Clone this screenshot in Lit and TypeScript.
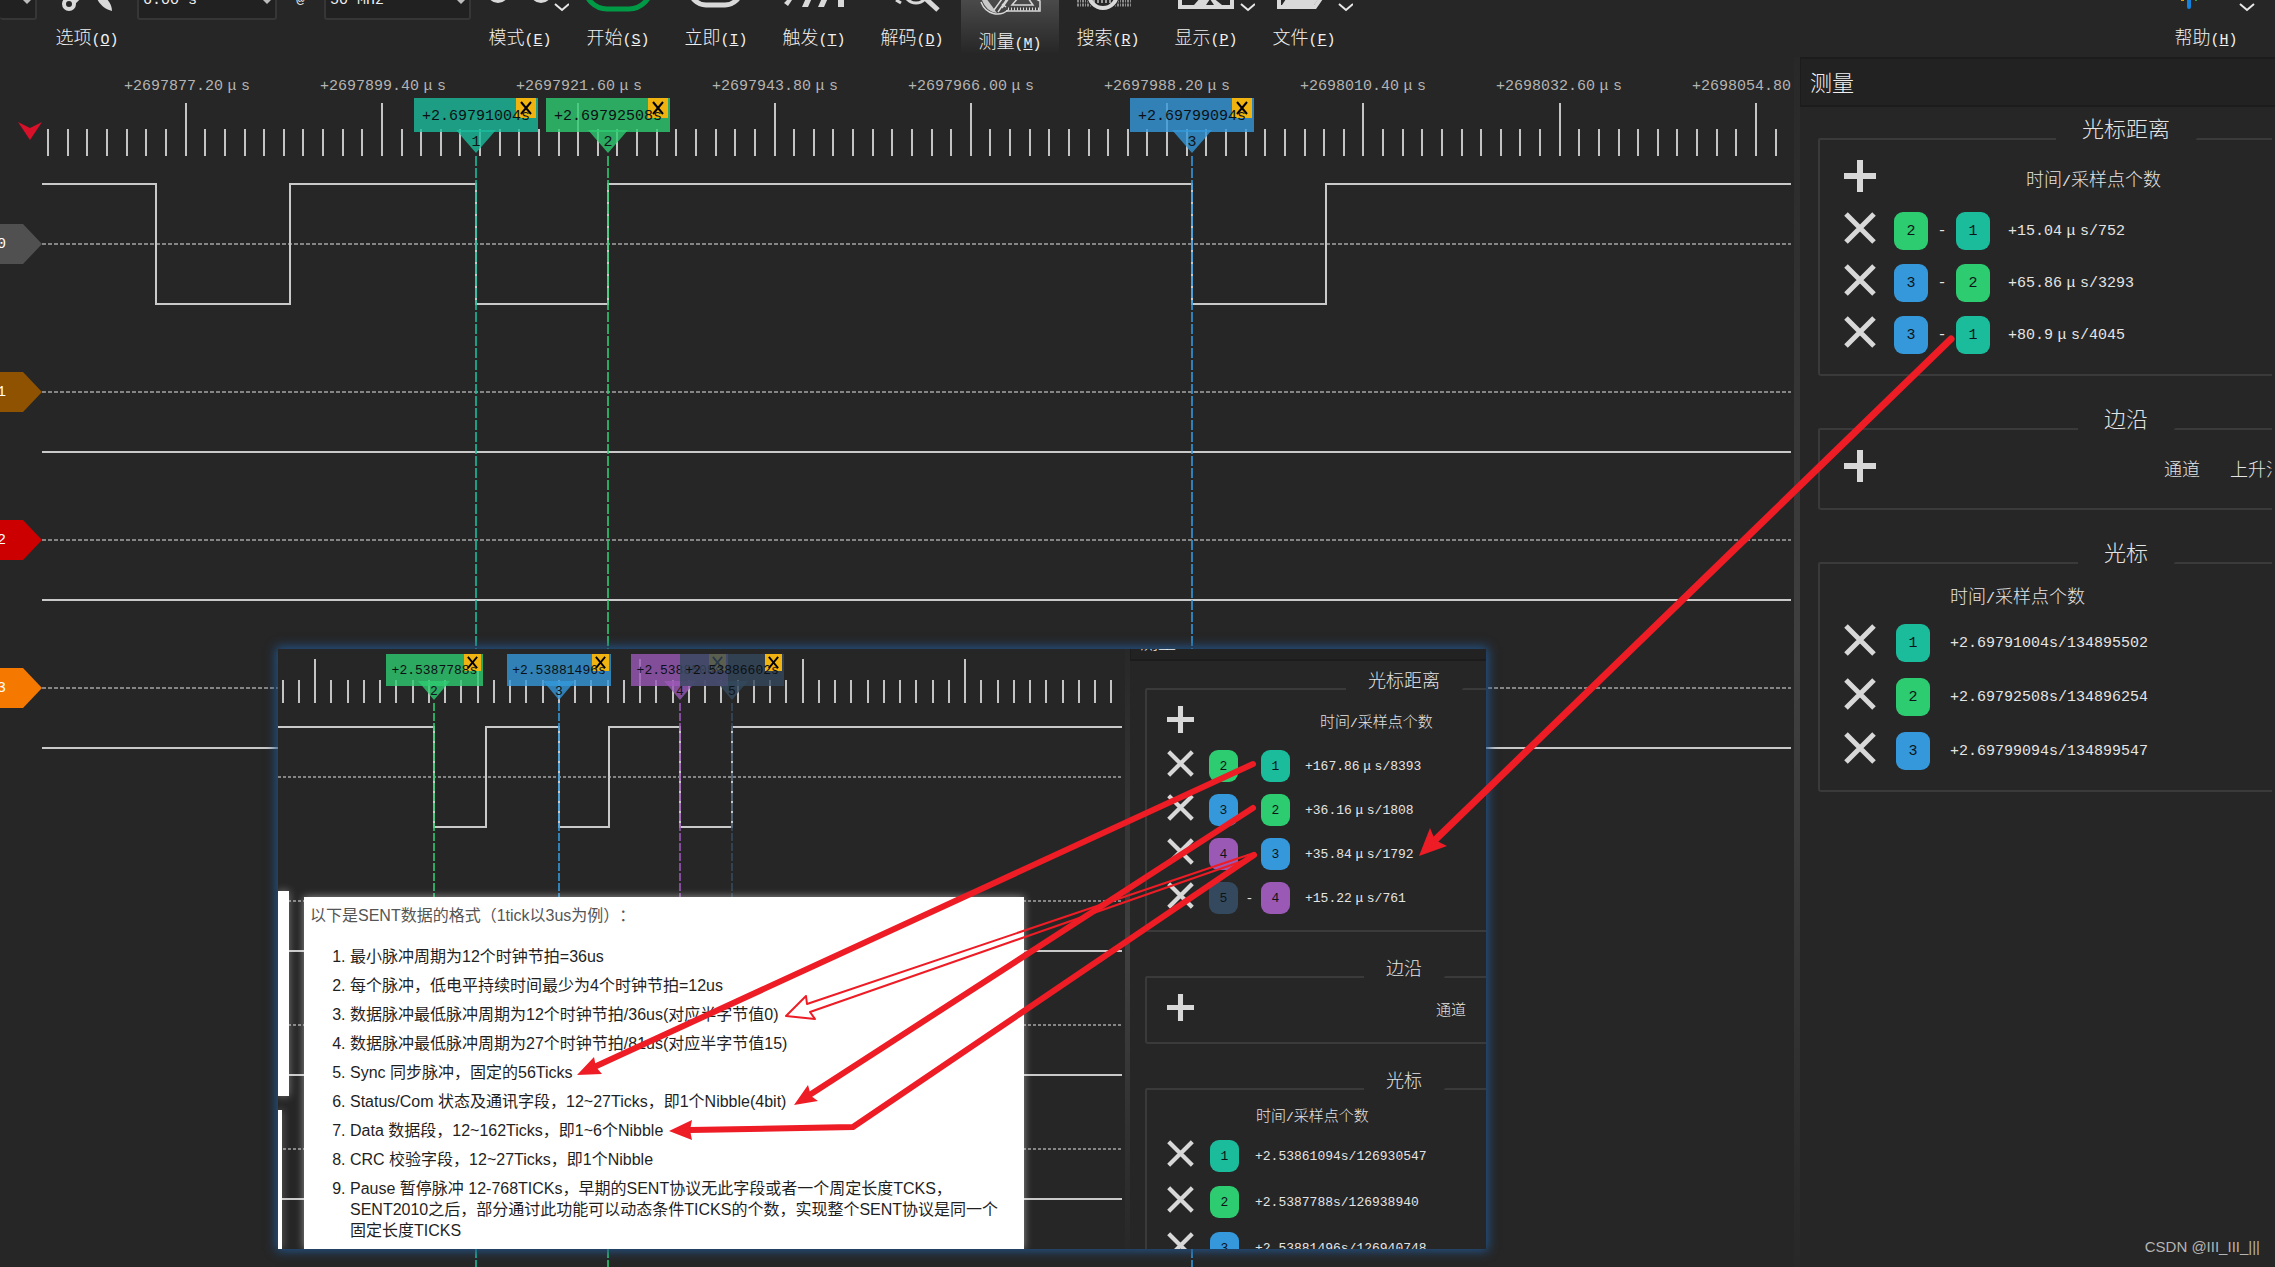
import { LitElement, html, svg, css, nothing } from "lit";
import { customElement, property } from "lit/decorators.js";

const TEAL = "#1abc9c";
const GREEN = "#2ecc71";
const BLUE = "#3498db";
const PURPLE = "#9b59b6";
const SLATE = "#34495e";
const COLORS: Record<number, string> = { 1: TEAL, 2: GREEN, 3: BLUE, 4: PURPLE, 5: SLATE };

/** Splits a label so that Han characters and the micro sign take a full cell, Latin a half cell. */
function mixed(text: string) {
  return text
    .split(/([\u2e80-\u9fff]+|μ)/)
    .filter((part) => part !== "")
    .map((part) =>
      part === "μ"
        ? html`<span class="mu">μ</span>`
        : /[\u2e80-\u9fff]/.test(part)
          ? html`<span class="cjk">${part}</span>`
          : part
    );
}

const base = css`
  :host {
    --latin: 15px;
    --han: 18px;
    box-sizing: border-box;
    font-family: "Liberation Mono", "Noto Sans CJK SC", monospace;
    font-size: var(--latin);
    color: #e4e4e4;
  }
  :host([compact]) {
    --latin: 13px;
    --han: 15px;
  }
  *,
  *::before,
  *::after {
    box-sizing: border-box;
  }
  button {
    margin: 0;
    padding: 0;
    border: 0;
    background: none;
    color: inherit;
    font: inherit;
    cursor: pointer;
  }
  svg {
    display: block;
  }
  .cjk {
    font-family: "Noto Sans CJK SC", sans-serif;
    font-size: var(--han);
    font-weight: 300;
  }
  .mu {
    display: inline-block;
    width: var(--han);
    text-align: center;
  }
`;

/* ---------------------------------------------------------------- toolbar */

interface Tool {
  label: string;
  key: string;
  x: number;
  art: unknown;
  menu?: number;
  active?: boolean;
}

const chevron = (x: number) =>
  svg`<path d="M${x - 7} 4 L${x} 10 L${x + 7} 4" fill="none" stroke="#e8e8e8" stroke-width="2"/>`;

const TOOLS: Tool[] = [
  {
    label: "模式", key: "E", x: 471, menu: 562,
    art: svg`<circle cx="498" cy="-8" r="9" fill="none" stroke="#d9d9d9" stroke-width="4"/>
      <circle cx="541" cy="-8" r="9" fill="none" stroke="#d9d9d9" stroke-width="4"/>`,
  },
  {
    label: "开始", key: "S", x: 569,
    art: svg`<rect x="585" y="-42" width="66" height="51" rx="22" fill="none" stroke="#009a46" stroke-width="5"/>`,
  },
  {
    label: "立即", key: "I", x: 667,
    art: svg`<rect x="690" y="-40" width="51" height="45" rx="16" fill="none" stroke="#d9d9d9" stroke-width="5"/>`,
  },
  {
    label: "触发", key: "T", x: 765,
    art: svg`<path d="M784 3 L789 -2 L792 0 L788 6 Z M802 7 L806 -2 L812 -2 L808 7 Z M818 7 L822 -2 L828 -2 L824 7 Z M838 -2 H844 V7 H838 Z" fill="#d9d9d9"/>`,
  },
  {
    label: "解码", key: "D", x: 863,
    art: svg`<path d="M896 0 L901 3" stroke="#d9d9d9" stroke-width="3"/>
      <circle cx="916" cy="-9" r="12" fill="none" stroke="#d9d9d9" stroke-width="3"/>
      <path d="M925 -2 L938 10" stroke="#d9d9d9" stroke-width="5"/>`,
  },
  {
    label: "测量", key: "M", x: 961, active: true,
    art: svg`<path d="M981 2 C986 15 1000 17 1008 10" fill="none" stroke="#d9d9d9" stroke-width="1.5"/>
      <path d="M982 0 C985 8 990 12 997 13 L986 -2 Z" fill="#c9c9c9"/>
      <path d="M994 10 L1002 -1 M998 12 L1007 -1 M1002 4 L1006 7" stroke="#d9d9d9" stroke-width="1.5"/>
      <path d="M1009 -2 L1002 8 M1006 11 H1040 V1 L1034 -2" fill="none" stroke="#d9d9d9" stroke-width="1.5"/>
      <path d="M1012 5 L1018 -2 H1028 L1033 5 Z" fill="none" stroke="#d9d9d9" stroke-width="1.5"/>
      <path d="M1008 9 H1039" stroke="#d9d9d9" stroke-width="3" stroke-dasharray="1 2"/>`,
  },
  {
    label: "搜索", key: "R", x: 1059,
    art: svg`<path d="M1077 1 H1131 M1077 5 H1131" stroke="#8a8a8a" stroke-width="3" stroke-dasharray="2 1 1 1"/>
      <circle cx="1103" cy="-6" r="17" fill="#262626"/>
      <path d="M1093 1 H1113" stroke="#9a9a9a" stroke-width="4" stroke-dasharray="2 2"/>
      <circle cx="1103" cy="-6" r="14" fill="none" stroke="#d9d9d9" stroke-width="4"/>`,
  },
  {
    label: "显示", key: "P", x: 1157, menu: 1248,
    art: svg`<path d="M1180 -4 V7 H1232 V-4" fill="none" stroke="#d9d9d9" stroke-width="4"/>
      <path d="M1194 5 L1201 -3 H1212 L1222 5 Z" fill="#d9d9d9"/>
      <path d="M1206 5 L1210 -1 L1214 5 Z" fill="#262626"/>`,
  },
  {
    label: "文件", key: "F", x: 1255, menu: 1346,
    art: svg`<path d="M1279 -4 V7 H1315 L1324 -6" fill="none" stroke="#d9d9d9" stroke-width="4"/>
      <path d="M1282 5 L1288 -4 H1321 L1314 5 Z" fill="#d9d9d9"/>`,
  },
];

const OPTIONS: Tool = {
  label: "选项", key: "O", x: 37,
  art: svg`<circle cx="68" cy="4" r="5" fill="none" stroke="#d9d9d9" stroke-width="4"/>
    <path d="M72 2 L80 -6" stroke="#d9d9d9" stroke-width="6"/>
    <path d="M95 -4 C98 5 104 9 111 11 C111 4 106 -2 101 -5 Z" fill="#d9d9d9"/>`,
};

const HELP: Tool = {
  label: "帮助", key: "H", x: 2157, menu: 2247,
  art: svg`<path d="M2189 -4 V7" stroke="#1383dd" stroke-width="4" stroke-linecap="round"/>
    <path d="M2181 0 H2184" stroke="#d9a400" stroke-width="2"/>
    <path d="M2195 0 H2197" stroke="#2f9e44" stroke-width="2"/>`,
};

@customElement("tool-bar")
export class ToolBar extends LitElement {
  static styles = [
    base,
    css`
      :host {
        display: flex;
        height: 57px;
        overflow: hidden;
      }
      .tool {
        flex: none;
        display: flex;
        flex-direction: column;
        align-items: center;
        width: 98px;
        height: 54px;
        line-height: 22px;
        white-space: nowrap;
        color: #f0f0f0;
      }
      .tool.active {
        gap: 4px;
        background: linear-gradient(#4a4a4a, #262626);
      }
      .tool.wide {
        width: 100px;
      }
      .art {
        flex: none;
        width: 98px;
        height: 25px;
      }
      .field {
        flex: none;
        position: relative;
        height: 40px;
        margin-top: -20px;
      }
      .field select {
        appearance: none;
        display: block;
        width: 100%;
        height: 100%;
        padding: 0 4px;
        border: 2px solid #363636;
        border-radius: 3px;
        background: #212121;
        color: #f0f0f0;
        font: inherit;
      }
      .caret {
        position: absolute;
        right: 6px;
        bottom: 16px;
        border: 4px solid transparent;
        border-top-color: #bdbdbd;
        border-bottom-width: 0;
        pointer-events: none;
      }
      .depth {
        width: 37px;
      }
      .depth select {
        border-left: 0;
      }
      .span {
        width: 140px;
      }
      .rate {
        width: 147px;
      }
      .at {
        flex: none;
        width: 47px;
        margin-top: -10px;
        line-height: 20px;
        text-align: center;
      }
      .fill {
        flex: 1;
      }
      .help {
        margin-right: 20px;
      }
    `,
  ];

  private tool(t: Tool, extra = "") {
    return html`<button class="tool ${t.active ? "active" : ""} ${extra}">
      <svg class="art" viewBox="${t.x} 0 98 25" aria-hidden="true">${t.art}${t.menu ? chevron(t.menu) : nothing}</svg>
      <span>${mixed(t.label)}(<u>${t.key}</u>)</span>
    </button>`;
  }

  render() {
    return html`
      <div class="field depth"><select aria-label="深度"><option></option></select><span class="caret"></span></div>
      ${this.tool(OPTIONS, "wide")}
      <div class="field span"><select aria-label="时长"><option>6.00 s</option></select><span class="caret"></span></div>
      <span class="at">@</span>
      <div class="field rate"><select aria-label="采样率"><option>50 MHz</option></select><span class="caret"></span></div>
      ${TOOLS.map((t) => this.tool(t))}
      <span class="fill"></span>
      ${this.tool(HELP, "help")}
    `;
  }
}

/* ------------------------------------------------------------------ scope */

interface Cursor {
  id: number;
  x: number;
  left: number;
  time: string;
}

interface ScopeModel {
  labels: string[];
  ticks: { start: number; step: number; count: number; major: number; top: number; minorTop: number; bottom: number; height: number };
  row: { height: number; high: number; mid: number; low: number };
  tags: string[];
  edges: number[];
  origin: number;
  cursors: Cursor[];
  cursorTop: number;
  dash: string;
}

const MAIN_SCOPE: ScopeModel = {
  labels: [
    "+2697877.20μs", "+2697899.40μs", "+2697921.60μs", "+2697943.80μs", "+2697966.00μs",
    "+2697988.20μs", "+2698010.40μs", "+2698032.60μs", "+2698054.80μs",
  ],
  ticks: { start: 48.2, step: 19.63, count: 89, major: 7, top: 4, minorTop: 30, bottom: 57, height: 71 },
  row: { height: 148, high: 14, mid: 74, low: 134 },
  tags: ["#505050", "#8f5200", "#cc0000", "#f57900"],
  edges: [156, 290, 476, 608, 1192, 1326],
  origin: 42,
  cursors: [
    { id: 1, x: 476, left: 414, time: "+2.69791004s" },
    { id: 2, x: 608, left: 546, time: "+2.69792508s" },
    { id: 3, x: 1192, left: 1130, time: "+2.69799094s" },
  ],
  cursorTop: 99,
  dash: "10 2",
};

const INSET_SCOPE: ScopeModel = {
  labels: [],
  ticks: { start: 4.6, step: 16.25, count: 52, major: 2, top: 10, minorTop: 31, bottom: 54, height: 66 },
  row: { height: 124, high: 12, mid: 62, low: 112 },
  tags: ["", "", "", ""],
  edges: [156, 208, 281, 331, 402, 454],
  origin: 0,
  cursors: [
    { id: 2, x: 156, left: 108, time: "+2.5387788s" },
    { id: 3, x: 281, left: 229, time: "+2.53881496s" },
    { id: 4, x: 402, left: 353, time: "+2.5388508s" },
    { id: 5, x: 454, left: 402, time: "+2.53886602s" },
  ],
  cursorTop: 54,
  dash: "8 2",
};

@customElement("scope-view")
export class ScopeView extends LitElement {
  @property({ attribute: false }) model: ScopeModel = MAIN_SCOPE;
  @property({ type: Boolean, reflect: true }) compact = false;

  static styles = [
    base,
    css`
      :host {
        display: block;
        position: relative;
        overflow: hidden;
      }
      .labels {
        display: flex;
        padding: 18px 0 0 89px;
        line-height: 24px;
        color: #b4b4b4;
      }
      .label {
        flex: none;
        width: 196px;
        text-align: center;
        white-space: nowrap;
      }
      .ticks {
        width: 100%;
      }
      .channel {
        display: flex;
        align-items: center;
      }
      .tag {
        flex: none;
        width: 42px;
        height: 40px;
        line-height: 42px;
        text-indent: -3px;
        color: #fff;
        clip-path: polygon(0 0, 23px 0, 42px 20px, 23px 40px, 0 40px);
      }
      .wave {
        flex: 1;
        min-width: 0;
        margin-right: 3px;
      }
      .lines {
        position: absolute;
        left: 0;
        top: 0;
        width: 100%;
        height: 100%;
        pointer-events: none;
      }
      .needle {
        position: absolute;
        left: 18px;
        top: 65px;
      }
      .flag {
        position: absolute;
        top: 41px;
        display: flex;
        justify-content: center;
        width: 124px;
        height: 34px;
        line-height: 38px;
        color: #0c1014;
        white-space: nowrap;
      }
      .flag::before {
        content: "";
        position: absolute;
        inset: 0;
        background: var(--tone);
        opacity: 0.8;
      }
      .flag span {
        position: relative;
      }
      .close {
        position: absolute;
        right: 2px;
        top: 0;
        width: 20px;
        height: 20px;
        padding: 3px;
        background: #f0b30f;
      }
      .num {
        font-size: var(--latin);
        font-family: "Liberation Mono", monospace;
        fill: #101418;
      }
      :host([compact]) .flag {
        top: 5px;
        width: 104px;
        height: 32px;
        line-height: 34px;
      }
      :host([compact]) .flag.short {
        width: 97px;
      }
      :host([compact]) .close {
        width: 17px;
        height: 17px;
        padding: 2px;
      }
    `,
  ];

  private wave(index: number) {
    const { row, edges, origin } = this.model;
    let path = `M0 ${row.low} H4000`;
    if (index === 0) {
      path = `M0 ${row.high}`;
      edges.forEach((x, i) => {
        path += ` H${x - origin} V${i % 2 ? row.high : row.low}`;
      });
      path += " H4000";
    }
    return svg`<path d="M0 ${row.mid} H4000" stroke="#858585" stroke-width="2" stroke-dasharray=${this.compact ? "3 2" : "4 2"}/>
      <path d=${path} fill="none" stroke="#c9c9c9" stroke-width="2"/>`;
  }

  render() {
    const m = this.model;
    const t = m.ticks;
    const half = this.compact ? 16 : 20;
    const tipHeight = this.compact ? 19 : 23;
    const tip = m.cursorTop - 3;
    return html`
      ${m.labels.length
        ? html`<div class="labels">${m.labels.map((l) => html`<span class="label">${mixed(l)}</span>`)}</div>`
        : nothing}
      <svg class="ticks" height=${t.height} aria-hidden="true">
        ${Array.from({ length: t.count }, (_, i) => {
          const x = Math.round(t.start + i * t.step);
          const top = i % 10 === t.major ? t.top : t.minorTop;
          return svg`<path d="M${x} ${top} V${t.bottom}" stroke="#c4c4c4" stroke-width="2"/>`;
        })}
      </svg>
      ${m.tags.map(
        (color, i) => html`<div class="channel">
          ${color ? html`<div class="tag" style="background:${color}">${i}</div>` : nothing}
          <svg class="wave" height=${m.row.height} aria-hidden="true">${this.wave(i)}</svg>
        </div>`
      )}
      ${this.compact
        ? nothing
        : html`<svg class="needle" width="24" height="18" aria-hidden="true">
            <path d="M0 0 L12 6 L24 0 L12 18 Z" fill="#d8102a" />
          </svg>`}
      <svg class="lines" aria-hidden="true">
        ${m.cursors.map(
          (c) => svg`<g opacity="0.8">
            <path d="M${c.x} ${m.cursorTop} V4000" stroke=${COLORS[c.id]} stroke-width="2" stroke-dasharray=${m.dash}/>
            <path d="M${c.x - half} ${tip - tipHeight} H${c.x + half} L${c.x} ${tip} Z" fill=${COLORS[c.id]}/>
          </g>
          <text class="num" x=${c.x} y=${tip - (this.compact ? 5 : 7)} text-anchor="middle">${c.id}</text>`
        )}
      </svg>
      ${m.cursors.map(
        (c) => html`<div class="flag ${c.time.length < 12 ? "short" : ""}" style="left:${c.left}px;--tone:${COLORS[c.id]}">
          <button class="close" aria-label="关闭光标 ${c.id}">
            <svg width="100%" height="100%" viewBox="0 0 14 14"><path d="M2 1 L12 13 M12 1 L2 13" stroke="#000" stroke-width="2" /></svg>
          </button>
          <span>${c.time}</span>
        </div>`
      )}
    `;
  }
}

/* ---------------------------------------------------------- measure panel */

interface Distance {
  from: number;
  to: number;
  value: string;
}

@customElement("measure-panel")
export class MeasurePanel extends LitElement {
  @property({ attribute: false }) distances: Distance[] = [];
  @property({ attribute: false }) cursors: string[] = [];
  @property({ type: Boolean, reflect: true }) compact = false;

  static styles = [
    base,
    css`
      :host {
        --title: 22px;
        --icon: 32px;
        --chip-w: 34px;
        --chip-h: 38px;
        --chip-line: 40px;
        --dash-w: 28px;
        --pad: 20px;
        --inset: 24px;
        --row-gap: 14px;
        --cursor-gap: 16px;
        --cell: 18px;
        --cell-wide: 20px;
        --group-gap: 32px;
        --legend-h: 22px;
        --legend-line: 18px;
        --legend-pad: 26px;
        --cursor-head: 24px;
        --caption-line: 36px;
        display: block;
        overflow: hidden;
        background: #262626;
      }
      :host([compact]) {
        --title: 18px;
        --icon: 27px;
        --chip-w: 29px;
        --chip-h: 32px;
        --chip-line: 34px;
        --dash-w: 23px;
        --pad: 16px;
        --inset: 20px;
        --row-gap: 12px;
        --cursor-gap: 14px;
        --cell: 15px;
        --cell-wide: 16px;
        --group-gap: 26px;
        --legend-h: 20px;
        --legend-line: 18px;
        --legend-pad: 22px;
        --cursor-head: 20px;
        --caption-line: 30px;
      }
      .bar {
        padding: 0 9px;
        height: 50px;
        line-height: 44px;
        border: solid #1c1c1c;
        border-width: 2px 0 2px 1px;
        background: #222;
        font-family: "Noto Sans CJK SC", sans-serif;
        font-size: var(--title);
        font-weight: 300;
        color: #f0f0f0;
      }
      .view {
        margin-right: 3px;
        overflow: hidden;
      }
      .groups {
        display: flex;
        flex-direction: column;
        gap: var(--group-gap);
        width: 616px;
        margin: 11px 0 0 18px;
      }
      .legend {
        display: flex;
        align-items: flex-end;
        height: var(--legend-h);
      }
      .legend::before,
      .legend::after {
        content: "";
        flex: 1;
        height: 2px;
        background: #3a3a3a;
        border-top-left-radius: 2px;
      }
      .legend h2 {
        align-self: flex-start;
        margin: 0;
        padding: 0 var(--legend-pad);
        line-height: var(--legend-line);
        font-family: "Noto Sans CJK SC", sans-serif;
        font-size: var(--title);
        font-weight: 300;
      }
      .body {
        display: flex;
        flex-direction: column;
        gap: var(--row-gap);
        padding: var(--pad) 0 var(--pad) var(--inset);
        border: solid #3a3a3a;
        border-width: 0 2px 2px 2px;
        border-radius: 0 0 3px 3px;
      }
      .body.cursors {
        gap: var(--cursor-gap);
      }
      .row {
        display: flex;
        height: var(--chip-h);
        line-height: var(--chip-line);
        white-space: nowrap;
      }
      .row.top {
        line-height: var(--caption-line);
      }
      .icon {
        flex: none;
        width: var(--icon);
        height: var(--icon);
      }
      .chip {
        flex: none;
        width: var(--chip-w);
        height: var(--chip-h);
        border-radius: 9px;
        text-align: center;
        color: #0c1418;
      }
      .chip.first {
        margin-left: var(--cell);
      }
      .cursors .chip {
        margin-left: var(--cell-wide);
      }
      .minus {
        flex: none;
        width: var(--dash-w);
        text-align: center;
      }
      .value {
        margin-left: var(--cell);
      }
      .cursors .value {
        margin-left: var(--cell-wide);
      }
      .caption {
        margin-left: 150px;
      }
      .channel {
        margin-left: 288px;
      }
      .edge {
        margin-left: 30px;
      }
      .cursor-head {
        height: var(--cursor-head);
        line-height: 22px;
        padding-left: 106px;
      }
      :host([compact]) .bar {
        height: 42px;
        margin-top: -30px;
        line-height: 40px;
      }
      :host([compact]) .view {
        margin-right: 0;
      }
      :host([compact]) .groups {
        width: 518px;
        margin: 9px 0 0 15px;
      }
      :host([compact]) .caption {
        margin-left: 126px;
      }
      :host([compact]) .channel {
        margin-left: 242px;
      }
      :host([compact]) .edge {
        margin-left: 25px;
      }
      :host([compact]) .cursor-head {
        line-height: 18px;
        padding-left: 89px;
      }
    `,
  ];

  private add(label: string) {
    return html`<button class="icon" aria-label=${label}>
      <svg width="100%" height="100%" viewBox="0 0 32 32"><path d="M16 0 V32 M0 16 H32" stroke="#d8d8d8" stroke-width="6" /></svg>
    </button>`;
  }

  private remove(label: string) {
    return html`<button class="icon" aria-label=${label}>
      <svg width="100%" height="100%" viewBox="0 0 32 32"><path d="M2 2 L30 30 M30 2 L2 30" stroke="#d8d8d8" stroke-width="5" /></svg>
    </button>`;
  }

  render() {
    return html`
      <div class="bar">测量</div>
      <div class="view">
        <div class="groups">
          <section>
            <div class="legend"><h2>光标距离</h2></div>
            <div class="body">
              <div class="row top">${this.add("添加距离")}<span class="caption">${mixed("时间/采样点个数")}</span></div>
              ${this.distances.map(
                (d) => html`<div class="row">
                  ${this.remove("删除距离")}
                  <button class="chip first" style="background:${COLORS[d.from]}">${d.from}</button>
                  <span class="minus">-</span>
                  <button class="chip" style="background:${COLORS[d.to]}">${d.to}</button>
                  <span class="value">${mixed(d.value)}</span>
                </div>`
              )}
            </div>
          </section>
          <section>
            <div class="legend"><h2>边沿</h2></div>
            <div class="body">
              <div class="row top">
                ${this.add("添加边沿")}<span class="channel">${mixed("通道")}</span><span class="edge">${mixed("上升沿")}</span>
              </div>
            </div>
          </section>
          <section>
            <div class="legend"><h2>光标</h2></div>
            <div class="body cursors">
              <div class="cursor-head">${mixed("时间/采样点个数")}</div>
              ${this.cursors.map(
                (value, i) => html`<div class="row">
                  ${this.remove("删除光标")}
                  <button class="chip" style="background:${COLORS[i + 1]}">${i + 1}</button>
                  <span class="value">${value}</span>
                </div>`
              )}
            </div>
          </section>
        </div>
      </div>
    `;
  }
}

/* -------------------------------------------------------------- note page */

const NOTES = [
  "最小脉冲周期为12个时钟节拍=36us",
  "每个脉冲，低电平持续时间最少为4个时钟节拍=12us",
  "数据脉冲最低脉冲周期为12个时钟节拍/36us(对应半字节值0)",
  "数据脉冲最低脉冲周期为27个时钟节拍/81us(对应半字节值15)",
  "Sync 同步脉冲，固定的56Ticks",
  "Status/Com 状态及通讯字段，12~27Ticks，即1个Nibble(4bit)",
  "Data 数据段，12~162Ticks，即1~6个Nibble",
  "CRC 校验字段，12~27Ticks，即1个Nibble",
  "Pause 暂停脉冲 12-768TICKs，早期的SENT协议无此字段或者一个周定长度TCKS，SENT2010之后，部分通讨此功能可以动态条件TICKS的个数，实现整个SENT协议是同一个固定长度TICKS",
];

@customElement("note-page")
export class NotePage extends LitElement {
  static styles = css`
    :host {
      display: block;
      box-sizing: border-box;
      padding: 8px 12px 0 6px;
      background: #fff;
      box-shadow: 0 0 8px rgba(255, 255, 255, 0.5);
      font: 16px/21px "Liberation Sans", "Noto Sans CJK SC", sans-serif;
      color: #1f1f1f;
    }
    p {
      margin: 0;
      color: #555;
      text-spacing-trim: space-all;
    }
    ol {
      display: flex;
      flex-direction: column;
      gap: 8px;
      margin: 20px 0 0;
      padding: 0 0 0 40px;
    }
  `;

  render() {
    return html`<p>以下是SENT数据的格式（1tick以3us为例）：</p>
      <ol>${NOTES.map((n) => html`<li>${n}</li>`)}</ol>`;
  }
}

/* -------------------------------------------------------------------- app */

@customElement("app-root")
export class AppRoot extends LitElement {
  static styles = [
    base,
    css`
      :host {
        position: relative;
        display: flex;
        flex-direction: column;
        height: 100vh;
        overflow: hidden;
        background: #262626;
      }
      .workspace {
        flex: 1;
        display: flex;
        min-height: 0;
      }
      .scope {
        flex: 1;
        min-width: 0;
      }
      .splitter {
        flex: none;
        width: 6px;
        background: linear-gradient(#282828, #404040 50%, #282828);
      }
      .side {
        flex: none;
        width: 475px;
      }
      .window {
        position: absolute;
        left: 278px;
        top: 649px;
        display: flex;
        width: 1208px;
        height: 600px;
        overflow: hidden;
        background: #262626;
      }
      .glow {
        position: absolute;
        left: 278px;
        top: 649px;
        width: 1208px;
        height: 600px;
        box-shadow: 0 0 10px 2px #22558c;
      }
      .window .splitter {
        width: 5px;
      }
      .window .side {
        width: 356px;
      }
      .window note-page {
        position: absolute;
        left: 26px;
        top: 248px;
        width: 720px;
        height: 352px;
      }
      .sheet {
        position: absolute;
        left: 0;
        background: #fff;
        box-shadow: 0 0 8px rgba(255, 255, 255, 0.4);
      }
      .sheet.upper {
        top: 242px;
        width: 11px;
        height: 205px;
      }
      .sheet.lower {
        top: 461px;
        width: 4px;
        height: 139px;
      }
      .marks {
        position: absolute;
        left: 0;
        top: 0;
        width: 100%;
        height: 100%;
        pointer-events: none;
      }
      .credit {
        position: absolute;
        right: 15px;
        bottom: 9px;
        font: 15px/22px "Liberation Sans", sans-serif;
        color: #b4b4b4;
      }
    `,
  ];

  render() {
    return html`
      <tool-bar></tool-bar>
      <div class="workspace">
        <scope-view class="scope" .model=${MAIN_SCOPE}></scope-view>
        <div class="splitter"></div>
        <measure-panel
          class="side"
          .distances=${[
            { from: 2, to: 1, value: "+15.04μs/752" },
            { from: 3, to: 2, value: "+65.86μs/3293" },
            { from: 3, to: 1, value: "+80.9μs/4045" },
          ]}
          .cursors=${["+2.69791004s/134895502", "+2.69792508s/134896254", "+2.69799094s/134899547"]}
        ></measure-panel>
      </div>
      <div class="glow"></div>
      <div class="window">
        <scope-view class="scope" compact .model=${INSET_SCOPE}></scope-view>
        <div class="splitter"></div>
        <measure-panel
          compact
          class="side"
          .distances=${[
            { from: 2, to: 1, value: "+167.86μs/8393" },
            { from: 3, to: 2, value: "+36.16μs/1808" },
            { from: 4, to: 3, value: "+35.84μs/1792" },
            { from: 5, to: 4, value: "+15.22μs/761" },
          ]}
          .cursors=${["+2.53861094s/126930547", "+2.5387788s/126938940", "+2.53881496s/126940748"]}
        ></measure-panel>
        <div class="sheet upper"></div>
        <div class="sheet lower"></div>
        <note-page></note-page>
      </div>
      <svg class="marks" aria-hidden="true" fill="#ee1c25" stroke="#ee1c25">
        <g fill="none" stroke-linecap="round" stroke-linejoin="miter">
          <path d="M1951 339 L1433 842" stroke-width="7" />
          <path d="M1253 764 L592 1068" stroke-width="6" />
          <path d="M1253 808 L808 1096" stroke-width="6" />
          <path d="M1254 855 L853 1127 L690 1130" stroke-width="6" />
          <path
            d="M786 1016 L806 996 L807 1004 L1254 853 L1254 857 L810 1012 L815 1019 Z"
            stroke-width="2"
            stroke-linejoin="round"
          />
        </g>
        <g stroke="none">
          <path d="M1419 856 L1430 828 L1435 840 L1447 846 Z" />
          <path d="M577 1075 L594 1057 L596 1067 L602 1074 Z" />
          <path d="M794 1105 L808 1085 L811 1096 L818 1101 Z" />
          <path d="M669 1131 L692 1120 L690 1130 L692 1140 Z" />
        </g>
      </svg>
      <span class="credit">CSDN @III_III_|||</span>
    `;
  }
}
